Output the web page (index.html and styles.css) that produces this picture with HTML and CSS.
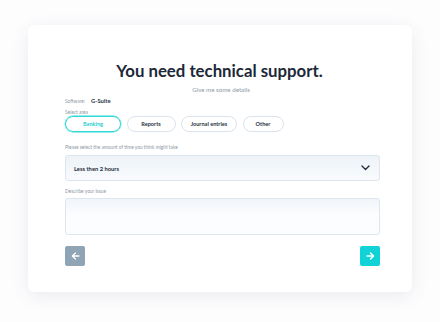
FILE: index.html
```html
<!DOCTYPE html>
<html lang="en">

<head>
    <meta charset="UTF-8">
    <title>Technical support</title>
    <link rel="stylesheet" href="styles.css">
</head>

<body>
    <div class="card">
        <h1 class="title">You need technical support.</h1>
        <p class="subtitle">Give me some details</p>

        <div class="software">
            <span class="label">Software:</span>
            <span class="value">G-Suite</span>
        </div>

        <div class="label">Select area</div>
        <ul class="pills">
            <li class="active">Banking</li>
            <li>Reports</li>
            <li>Journal entries</li>
            <li>Other</li>
        </ul>

        <div class="label">Please select the amount of time you think might take</div>
        <div class="select">
            <span>Less then 2 hours</span>
            <svg width="9" height="6" viewBox="0 0 9 6">
                <path d="M1 1l3.5 3.5L8 1" fill="none" stroke="#1f2d3d" stroke-width="1.4" stroke-linecap="round" stroke-linejoin="round" />
            </svg>
        </div>

        <div class="label">Describe your issue</div>
        <div class="textarea"></div>

        <div class="nav">
            <div class="btn backBtn">
                <svg width="9" height="8" viewBox="0 0 9 8">
                    <path d="M8 4H1.5M4.5 1L1.3 4l3.2 3" fill="none" stroke="#fff" stroke-width="1.3" stroke-linecap="round" stroke-linejoin="round" />
                </svg>
            </div>
            <div class="btn nextBtn">
                <svg width="9" height="8" viewBox="0 0 9 8">
                    <path d="M1 4h6.5M4.5 1l3.2 3-3.2 3" fill="none" stroke="#fff" stroke-width="1.3" stroke-linecap="round" stroke-linejoin="round" />
                </svg>
            </div>
        </div>
    </div>
</body>

</html>
```

FILE: styles.css
```css
* {
    margin: 0px;
    padding: 0px;
    list-style: none;
    box-sizing: border-box;
}

html,
body {
    width: 100%;
    height: 100%;
}

body {
    background-color: #fdfdfe;
    font-family: Lato, "Liberation Sans", sans-serif;
    color: #1f2d3d;
    padding: 25px 28px 30px 28px;
}

.card {
    height: 267px;
    background-color: #fff;
    border-radius: 6px;
    box-shadow: 0 4px 18px rgba(40, 60, 90, 0.09);
    padding: 36px 32px 0 37px;
}

.title {
    font-size: 16.8px;
    font-weight: 700;
    text-align: center;
    color: #1c2838;
    line-height: 20px;
    margin-right: 6px;
}

.subtitle {
    font-size: 6.2px;
    color: #8d99a6;
    text-align: center;
    margin-top: 5px;
    margin-bottom: 3px;
    line-height: 8px;
    margin-right: 3px;
}

.label {
    font-size: 4.8px;
    color: #8d99a6;
    line-height: 6px;
}

.software {
    display: flex;
    align-items: center;
    gap: 6px;
    margin-bottom: 5px;
}

.software .value {
    font-size: 5.8px;
    font-weight: 700;
    color: #2a3646;
}

.pills {
    display: flex;
    gap: 5.5px;
    margin-top: 1px;
}

.pills li {
    height: 16px;
    border: 1px solid #dbe4ec;
    border-radius: 8px;
    font-size: 5.6px;
    font-weight: 700;
    line-height: 14px;
    text-align: center;
    white-space: nowrap;
    color: #2a3646;
}

.pills li:nth-child(1) {
    width: 56px;
}

.pills li:nth-child(2) {
    width: 49px;
}

.pills li:nth-child(3) {
    width: 56px;
}

.pills li:nth-child(4) {
    width: 41px;
}

.pills .active {
    border-color: #2ed8d8;
    color: #27cfd2;
    box-shadow: 0 0 0 0.4px #2ed8d8;
}

.pills + .label {
    margin-top: 12px;
}

.select {
    display: flex;
    align-items: center;
    justify-content: space-between;
    height: 26px;
    margin-top: 5px;
    padding: 0 9px 0 8px;
    border: 1px solid #dde6ee;
    border-radius: 3px;
    background: linear-gradient(#eef3f8, #f9fbfd);
    font-size: 5.8px;
    font-weight: 700;
    color: #1f2d3d;
}

.select + .label {
    margin-top: 7px;
}

.textarea {
    height: 37px;
    margin-top: 4px;
    border: 1px solid #dde6ee;
    border-radius: 3px;
    background: linear-gradient(#f2f6fa, #fcfdfe 50%);
}

.nav {
    display: flex;
    justify-content: space-between;
    margin-top: 11px;
}

.btn {
    display: flex;
    align-items: center;
    justify-content: center;
    width: 20px;
    height: 20px;
    border-radius: 2px;
}

.backBtn {
    background-color: #8fa4b4;
}

.nextBtn {
    background-color: #11d2d6;
}
```
